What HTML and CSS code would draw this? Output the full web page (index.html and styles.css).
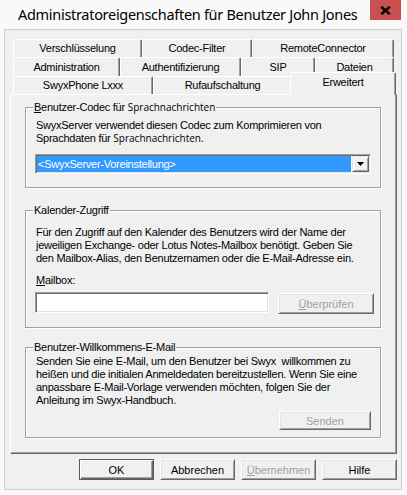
FILE: index.html
```html
<!DOCTYPE html>
<html lang="de">
<head>
<meta charset="utf-8">
<title>Administratoreigenschaften für Benutzer John Jones</title>
<link rel="stylesheet" href="styles.css">
</head>
<body>
<div class="window">
  <header class="titlebar">
    <span class="title">Administratoreigenschaften für Benutzer John Jones</span>
    <button class="close" type="button" aria-label="Schließen">
      <svg width="11" height="9" viewBox="0 0 11 9" aria-hidden="true">
        <path d="M1.2 0.8 L9.8 8.2 M9.8 0.8 L1.2 8.2" stroke="#000" stroke-width="2.4" fill="none"/>
      </svg>
    </button>
  </header>

  <div class="client">
    <nav class="tabstrip">
      <div class="tab-row row-1">
        <div class="tab t-verschl">Verschlüsselung</div>
        <div class="tab t-codec">Codec-Filter</div>
        <div class="tab t-remote">RemoteConnector</div>
      </div>
      <div class="tab-row row-2">
        <div class="tab t-admin">Administration</div>
        <div class="tab t-auth">Authentifizierung</div>
        <div class="tab t-sip">SIP</div>
        <div class="tab t-dateien">Dateien</div>
      </div>
      <div class="tab-row row-3">
        <div class="tab t-phone">SwyxPhone Lxxx</div>
        <div class="tab t-ruf">Rufaufschaltung</div>
        <div class="tab active">Erweitert</div>
      </div>
    </nav>

    <section class="page">
      <div class="group group-codec">
        <div class="group-label"><u>B</u>enutzer-Codec für <span class="alt">Sprachnachrichten</span></div>
        <p class="text">SwyxServer verwendet diesen Codec zum Komprimieren von<br>Sprachdaten für <span class="alt">Sprachnachrichten.</span></p>
        <div class="combo">
          <span class="combo-value">&lt;SwyxServer-Voreinstellung&gt;</span>
          <span class="combo-arrow">
            <svg width="7" height="4" viewBox="0 0 7 4" aria-hidden="true"><path d="M0 0 H7 L3.5 4 Z" fill="#000"/></svg>
          </span>
        </div>
      </div>

      <div class="group group-calendar">
        <div class="group-label">Kalender-Zugriff</div>
        <p class="text">Für den Zugriff auf den Kalender des Benutzers wird der Name der<br>jeweiligen Exchange- oder Lotus Notes-Mailbox benötigt. Geben Sie<br>den Mailbox-Alias, den Benutzernamen oder die E-Mail-Adresse ein.</p>
        <label class="field-label" for="mailbox"><u>M</u>ailbox:</label>
        <div class="field-row">
          <input id="mailbox" class="field" type="text">
          <button class="btn btn-check" type="button" disabled><u>Ü</u>berprüfen</button>
        </div>
      </div>

      <div class="group group-welcome">
        <div class="group-label">Benutzer-Willkommens-E-Mail</div>
        <p class="text">Senden Sie eine E-Mail, um den Benutzer bei Swyx&nbsp; willkommen zu<br>heißen und die initialen Anmeldedaten bereitzustellen. Wenn Sie eine<br>anpassbare E-Mail-Vorlage verwenden möchten, folgen Sie der<br>Anleitung im Swyx-Handbuch.</p>
        <button class="btn btn-send" type="button" disabled>Senden</button>
      </div>
    </section>

    <footer class="actions">
      <button class="btn btn-default" type="button">OK</button>
      <button class="btn" type="button">Abbrechen</button>
      <button class="btn" type="button" disabled><u>Ü</u>bernehmen</button>
      <button class="btn" type="button">Hilfe</button>
    </footer>
  </div>
</div>
</body>
</html>
```

FILE: styles.css
```css
* {
  box-sizing: border-box;
}

body {
  margin: 0;
  background: #f9f9f9;
  font-family: "Liberation Sans", Arial, sans-serif;
  font-size: 11px;
  letter-spacing: -0.25px;
  color: #000;
}

/* ---------- window frame ---------- */
.window {
  width: 407px;
  height: 495px;
  background: #f9f9f9;
}

.titlebar {
  height: 29px;
  display: flex;
  align-items: flex-start;
}

.title {
  padding: 4px 0 0 18px;
  font-family: "Noto Sans", sans-serif;
  font-size: 14.5px;
  letter-spacing: -0.3px;
  line-height: 20px;
  color: #000;
  white-space: nowrap;
}

.close {
  margin-left: auto;
  margin-right: 6px;
  width: 31px;
  height: 20px;
  padding: 0;
  border: 0;
  background: #c75050;
  display: flex;
  align-items: center;
  justify-content: center;
}

.client {
  margin-left: 4px;
  width: 398px;
  height: 461px;
  background: #f0f0f0;
  border: 1px solid #ccd1d6;
  display: flex;
  flex-direction: column;
}

/* ---------- tabs ---------- */
.tabstrip {
  margin: 9px 0 0 8px;
}

.tab-row {
  display: flex;
}

.row-1 { height: 18px; }
.row-2 { height: 19px; }
.row-3 { height: 18px; }

.tab {
  background: #f0f0f0;
  border-top: 1px solid #fff;
  border-left: 1px solid #fff;
  border-right: 1px solid #696969;
  box-shadow: inset -1px 0 0 #a0a0a0;
  border-radius: 2px 2px 0 0;
  text-align: center;
  line-height: 17px;
  white-space: nowrap;
}

.row-2 .tab { line-height: 18px; }

.t-verschl { width: 129px; }
.t-codec   { width: 110px; }
.t-remote  { width: 142px; }
.t-admin   { width: 107px; }
.t-auth    { width: 121px; }
.t-sip     { width: 74px; }
.t-dateien { width: 79px; }
.t-phone   { width: 140px; }
.t-ruf     { width: 139px; }

/* the selected tab is raised and joins the page below */
.tab.active {
  position: relative;
  z-index: 1;
  width: 106px;
  height: 23px;
  margin: -4px 0 0 -2px;
  padding-top: 1px;
  align-self: flex-start;
}

/* ---------- property page ---------- */
.page {
  margin-left: 5px;
  width: 387px;
  height: 360px;
  border-top: 1px solid #fff;
  border-left: 1px solid #fff;
  border-right: 1px solid #696969;
  border-bottom: 1px solid #696969;
  box-shadow: inset -1px -1px 0 #a0a0a0;
  display: flex;
  flex-direction: column;
  align-items: flex-start;
}

.group {
  margin-left: 14px;
  width: 356px;
  border: 1px solid #a0a0a0;
  box-shadow: 1px 1px 0 #fff, inset 1px 1px 0 #fff;
  padding: 0 0 0 10px;
  display: flex;
  flex-direction: column;
  align-items: flex-start;
}

.group-label {
  margin: -7px 0 0 -3px;
  padding: 0 1px;
  background: #f0f0f0;
  line-height: 13px;
  white-space: nowrap;
}

.alt {
  font-family: "Open Sans", sans-serif;
  font-size: 10px;
  letter-spacing: 0;
  line-height: 12px;
}

.text {
  margin: 0;
  line-height: 13px;
  white-space: nowrap;
}

.group-codec {
  margin-top: 12px;
  padding-bottom: 13px;
}
.group-codec .text { margin-top: 5px; }

.group-calendar {
  margin-top: 22px;
  padding-bottom: 13px;
}
.group-calendar .text { margin-top: 9px; }

.group-welcome {
  margin-top: 19px;
  padding-bottom: 7px;
}
.group-welcome .text { margin-top: 1px; }

/* ---------- combo box ---------- */
.combo {
  margin: 9px 0 0 -1px;
  width: 336px;
  height: 20px;
  padding: 1px;
  background: #fff;
  border: 1px solid;
  border-color: #a0a0a0 #fff #fff #a0a0a0;
  box-shadow: inset 1px 1px 0 #696969, inset -1px -1px 0 #e3e3e3;
  display: flex;
  gap: 1px;
}

.combo-value {
  flex: 1;
  background: #3399ff;
  color: #fff;
  line-height: 16px;
  padding-left: 1px;
  white-space: nowrap;
}

.combo-arrow {
  width: 17px;
  background: #f0f0f0;
  border: 1px solid;
  border-color: #e3e3e3 #696969 #696969 #e3e3e3;
  box-shadow: inset 1px 1px 0 #fff, inset -1px -1px 0 #a0a0a0;
  display: flex;
  align-items: center;
  justify-content: center;
}

/* ---------- edit field ---------- */
.field-label {
  margin-top: 9px;
  line-height: 13px;
}

.field-row {
  margin: 5px 0 0 -1px;
  display: flex;
  align-items: flex-start;
}

.field {
  width: 234px;
  height: 21px;
  margin: 0;
  padding: 0 2px;
  font: inherit;
  background: #fff;
  border: 1px solid;
  border-color: #a0a0a0 #fff #fff #a0a0a0;
  box-shadow: inset 1px 1px 0 #696969, inset -1px -1px 0 #e3e3e3;
  outline: none;
}

/* ---------- push buttons ---------- */
.btn {
  width: 75px;
  height: 21px;
  margin: 0;
  padding: 0;
  font: inherit;
  color: #000;
  background: #f0f0f0;
  border: 1px solid;
  border-color: #fff #696969 #696969 #fff;
  box-shadow: inset 1px 1px 0 #e3e3e3, inset -1px -1px 0 #a0a0a0;
  border-radius: 0;
}

.btn:disabled {
  color: #a0a0a0;
}

.btn-default {
  border-color: #5a5a5a;
  box-shadow: inset 1px 1px 0 #fff, inset -1px -1px 0 #696969, inset -2px -2px 0 #a0a0a0;
}

.btn-check {
  width: 96px;
  margin: 1px 0 0 9px;
}

.btn-send {
  width: 92px;
  height: 19px;
  margin: 4px 0 0 243px;
}

.actions {
  margin: 5px 4px 0 0;
  display: flex;
  justify-content: flex-end;
  gap: 6px;
}
```
